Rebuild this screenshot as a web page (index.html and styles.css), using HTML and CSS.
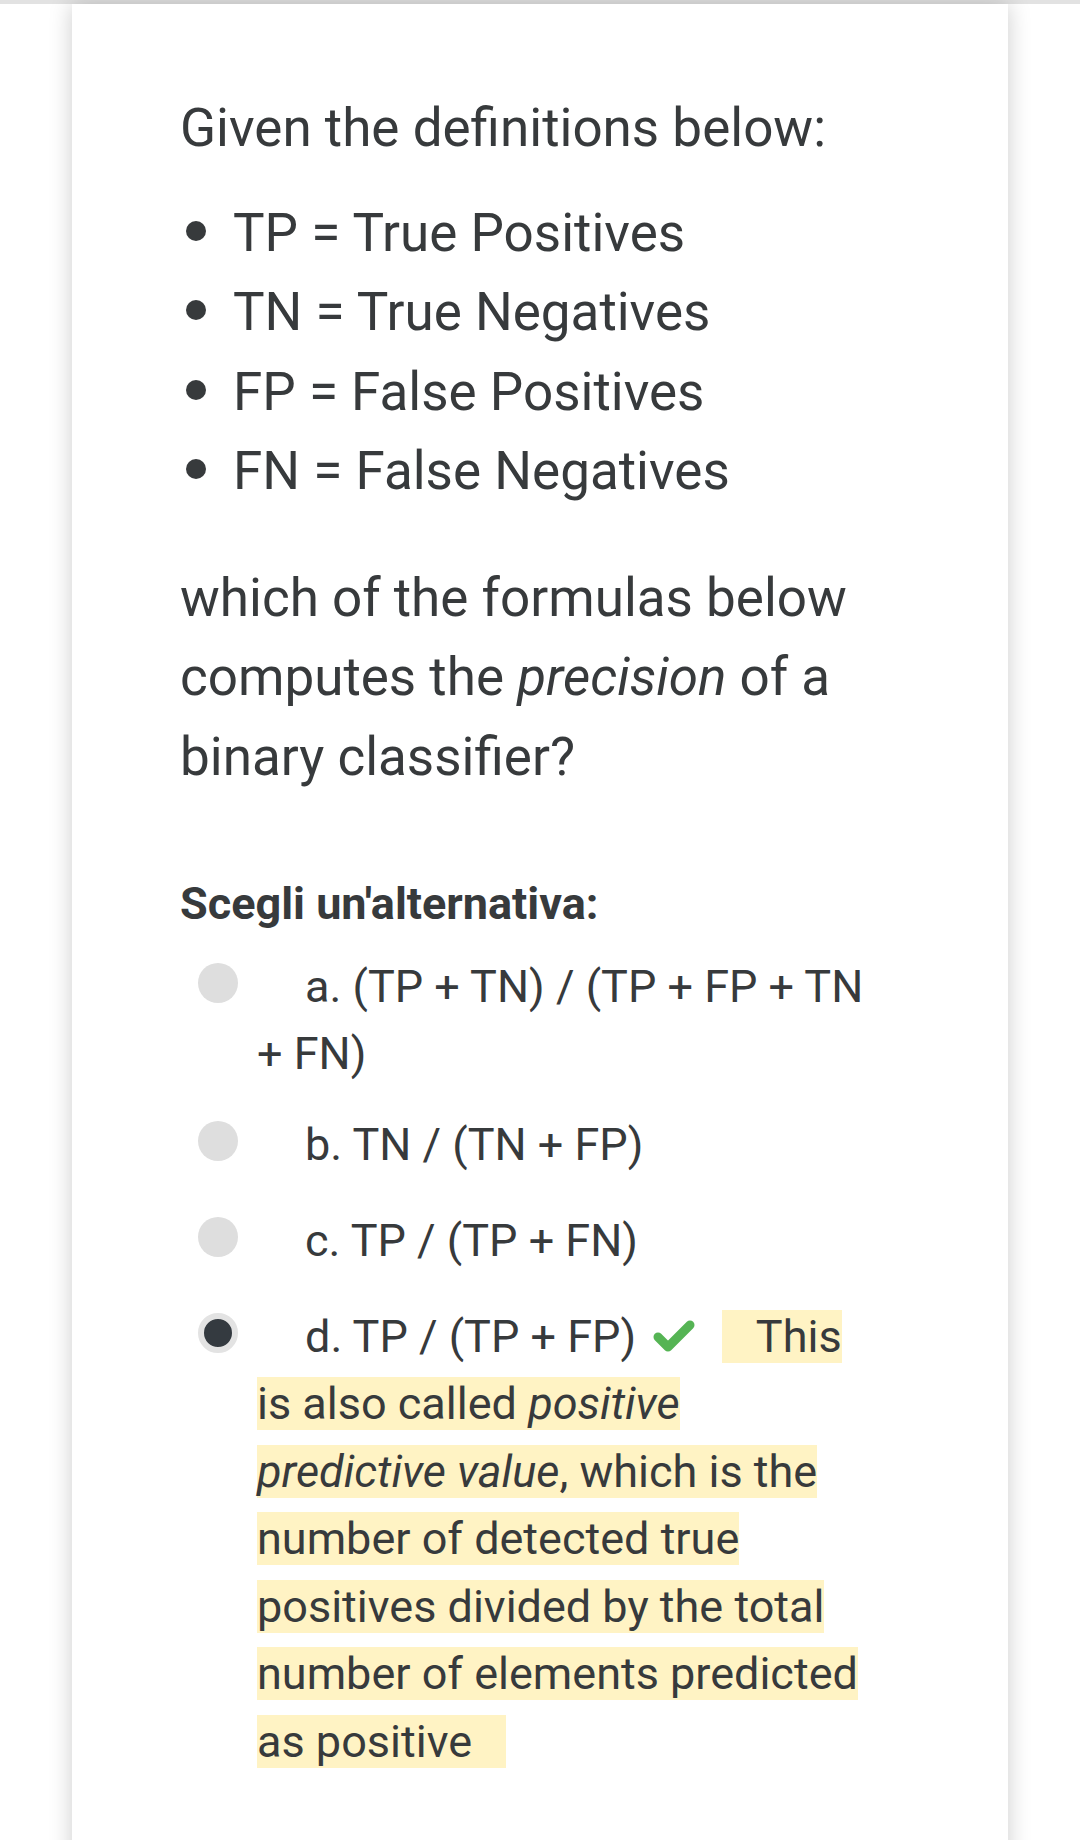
FILE: index.html
```html
<!DOCTYPE html>
<html lang="it">
<head>
<meta charset="utf-8">
<title>Quiz</title>
<link rel="stylesheet" href="styles.css">
</head>
<body>
<div class="page">
  <div class="card">
    <div class="qtext">
      <p class="intro">Given the definitions below:</p>
      <ul class="defs">
        <li>TP = True Positives</li>
        <li>TN = True Negatives</li>
        <li>FP = False Positives</li>
        <li>FN = False Negatives</li>
      </ul>
      <p class="question">which of the formulas below computes the <em>precision</em> of a binary classifier?</p>
    </div>
    <div class="ablock">
      <div class="prompt">Scegli un'alternativa:</div>
      <div class="answer">
        <div class="opt opt-a"><span class="radio"></span><span class="label">a. (TP + TN) / (TP + FP + TN + FN)</span></div>
        <div class="opt"><span class="radio"></span><span class="label">b. TN / (TN + FP)</span></div>
        <div class="opt opt-c"><span class="radio"></span><span class="label">c. TP / (TP + FN)</span></div>
        <div class="opt"><span class="radio checked"></span><span class="label">d. TP / (TP + FP)</span><svg class="tick" viewBox="0 0 42 32" width="42" height="32"><polyline points="5,17 15,27 37,5" fill="none" stroke="#55b454" stroke-width="9" stroke-linecap="round" stroke-linejoin="round"/></svg><span class="feedback">This is also called <em>positive predictive value</em>, which is the number of detected true positives divided by the total number of elements predicted as positive</span></div>
      </div>
    </div>
  </div>
</div>
</body>
</html>
```
FILE: styles.css
```css
html, body {
  margin: 0;
  padding: 0;
  background: #ffffff;
}

body {
  font-family: Roboto, "Noto Sans", "Liberation Sans", sans-serif;
  color: #373a3c;
}

.page {
  padding-top: 4px;
  background: linear-gradient(#e2e2e2, #e2e2e2) top / 100% 4px no-repeat;
  height: 1836px;
  overflow: hidden;
}

.card {
  margin: 0 72px;
  background: #ffffff;
  box-shadow: 0 0 22px rgba(0, 0, 0, 0.2);
  padding: 85px 144px 200px 108px;
  min-height: 1900px;
}

.qtext {
  font-size: 53px;
  line-height: 79.5px;
}

.intro {
  margin: 0;
}

.defs {
  list-style: none;
  margin: 25px 0 0 0;
  padding: 0;
}

.defs li::before {
  content: "";
  display: inline-block;
  width: 20px;
  height: 20px;
  border-radius: 50%;
  background: #373a3c;
  margin-left: 6px;
  margin-right: 27px;
  vertical-align: 10px;
}

.question {
  margin: 47px 0 0 0;
}

.ablock {
  margin-top: 75px;
}

.prompt {
  font-size: 45px;
  font-weight: bold;
  line-height: 64px;
  margin-bottom: 2px;
}

.opt {
  font-size: 45px;
  line-height: 67.5px;
  padding: 14.5px 0 14.5px 77px;
}

.opt-a {
  padding-bottom: 8.5px;
}

.opt-c {
  padding-bottom: 13.5px;
}

.radio {
  display: inline-block;
  box-sizing: border-box;
  width: 40px;
  height: 40px;
  border-radius: 50%;
  background: #dedede;
  margin-left: -59px;
  margin-right: 67px;
  vertical-align: -1px;
}

.radio.checked {
  background: #343a40;
  border: 6.5px solid #e3e3e3;
}

.tick {
  display: inline-block;
  vertical-align: baseline;
  margin-left: 17px;
  margin-right: 27px;
}

.feedback {
  font-size: 45px;
  line-height: 60px;
  background: #fff3c4;
  padding: 0 0.75em;
  -webkit-box-decoration-break: slice;
  box-decoration-break: slice;
}
```
